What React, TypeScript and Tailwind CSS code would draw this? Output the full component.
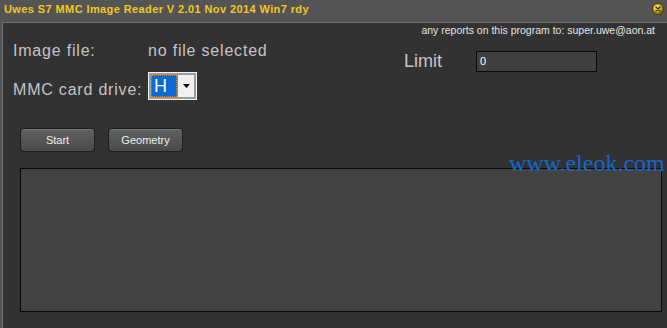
import React from "react";

function CloseButton() {
  return (
    <svg width="12" height="12" viewBox="0 0 12 12" className="block">
      <defs>
        <radialGradient id="gold" cx="40%" cy="35%" r="65%">
          <stop offset="0%" stopColor="#fff2a0" />
          <stop offset="55%" stopColor="#d4b020" />
          <stop offset="100%" stopColor="#7a6200" />
        </radialGradient>
      </defs>
      <circle cx="6" cy="6" r="5.5" fill="url(#gold)" stroke="#3a3000" strokeWidth="0.8" />
      <path d="M4 4 L8 8 M8 4 L4 8" stroke="#3b3000" strokeWidth="1.4" strokeLinecap="round" />
    </svg>
  );
}

function DriveSelect() {
  return (
    <div className="flex h-[28px] w-[49px] border border-[#f4f4f4] bg-[#9a9a9a] p-[2px]">
      <div className="flex flex-1 items-center border border-dotted border-[#e08020] bg-[#0a6ad8] pl-[2px] text-[18px] leading-[20px] text-white">
        H
      </div>
      <div className="flex w-[17px] items-center justify-center border-l border-[#888] bg-[#f0f0f0]">
        <svg width="7" height="4" viewBox="0 0 7 4">
          <path d="M0 0 H7 L3.5 4 Z" fill="#000" />
        </svg>
      </div>
    </div>
  );
}

function Btn({ label }: { label: string }) {
  return (
    <button className="h-[24px] w-[75px] rounded-[4px] border border-[#1e1e1e] bg-gradient-to-b from-[#626262] to-[#4a4a4a] text-[11px] leading-[13px] text-[#f0f0f0] shadow-[inset_0_1px_0_#777]">
      {label}
    </button>
  );
}

export default function App() {
  return (
    <div className="relative flex h-[328px] w-[667px] flex-col overflow-hidden bg-[#545454] font-['Liberation_Sans',Arial,sans-serif]">
      <div className="flex h-[22px] items-start justify-between pl-[4px] pr-[2px]">
        <span className="pt-[3px] text-[11px] font-bold leading-[13px] tracking-[0.4px] text-[#f2c820]">
          Uwes S7 MMC Image Reader V 2.01 Nov 2014 Win7 rdy
        </span>
        <span className="mr-[1px] pt-[3px]">
          <CloseButton />
        </span>
      </div>

      <div className="ml-[2px] flex flex-1 flex-col border-l border-t border-[#727272] bg-[#323232]">
        <div className="flex justify-end pr-[12px] pt-[1px] text-[10.5px] leading-[13px] text-[#e4e4e4]">
          any reports on this program to: super.uwe@aon.at
        </div>

        <div className="flex pl-[10px]">
          <div className="flex w-[391px] flex-col">
            <div className="mt-[5px] flex text-[16px] leading-[18px] tracking-[0.8px] text-[#c4c4c4]">
              <span className="w-[135px]">Image file:</span>
              <span>no file selected</span>
            </div>
            <div className="mt-[12px] flex items-start">
              <span className="mt-[9px] w-[135px] text-[16px] leading-[18px] tracking-[0.8px] text-[#c4c4c4]">
                MMC card drive:
              </span>
              <DriveSelect />
            </div>
          </div>
          <div className="mt-[14px] flex items-start">
            <span className="w-[72px] text-[18px] leading-[20px] text-[#c8c8c8]">Limit</span>
            <div className="flex h-[21px] w-[121px] items-center border border-[#0a0a0a] bg-[#404040] pl-[3px] text-[11px] text-white">
              0
            </div>
          </div>
        </div>

        <div className="mt-[28px] flex gap-[13px] pl-[17px]">
          <Btn label="Start" />
          <Btn label="Geometry" />
        </div>

        <div className="ml-[17px] mt-[16px] h-[144px] w-[642px] border border-[#080808] bg-[#424242]" />
      </div>

      <div className="pointer-events-none absolute left-[509px] top-[150px] whitespace-nowrap font-['Liberation_Serif',serif] text-[24px] leading-[26px] text-[#1466cc]">
        www.eleok.com
      </div>
    </div>
  );
}
